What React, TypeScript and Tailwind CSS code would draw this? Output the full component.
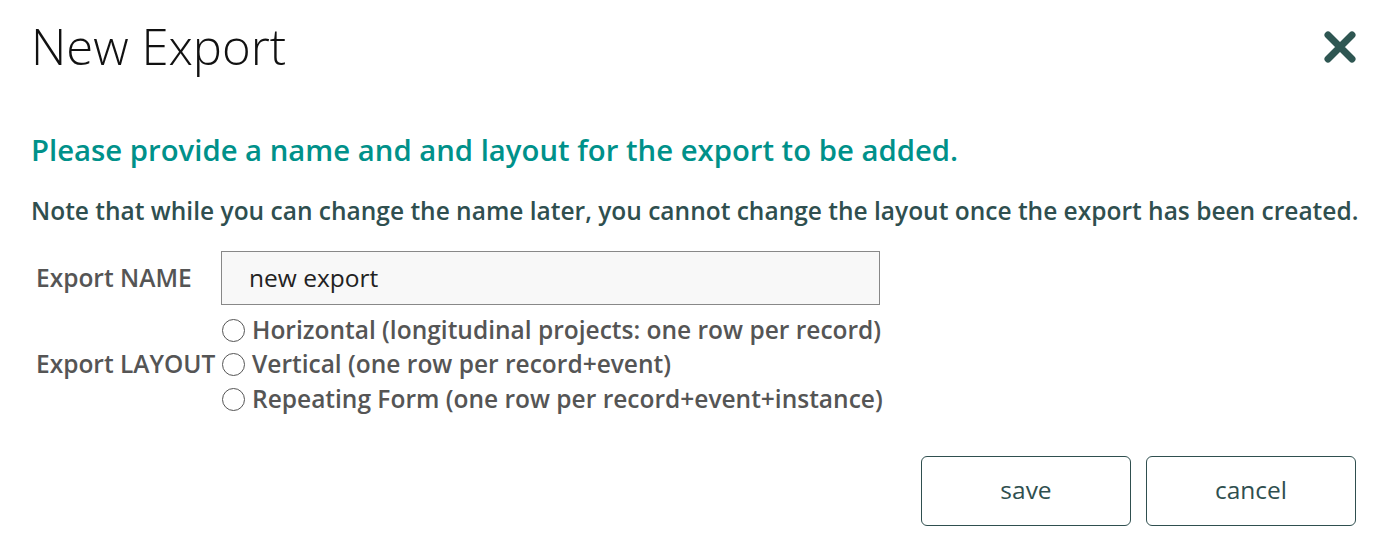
import React from 'react';

const options = [
  'Horizontal (longitudinal projects: one row per record)',
  'Vertical (one row per record+event)',
  'Repeating Form (one row per record+event+instance)',
];

export default function App() {
  return (
    <div
      className="w-[1373px] h-[547px] bg-white overflow-hidden"
      style={{ fontFamily: '"Open Sans", sans-serif' }}
    >
      {/* Header */}
      <div className="flex items-start justify-between pl-[31px] pr-[16px] pt-[16px]">
        <h1 className="text-[49px] font-light leading-[60px] text-[#111]">New Export</h1>
        <button className="mt-[14px]">
          <svg width="34" height="34" viewBox="0 0 34 34">
            <path
              d="M5 5 L29 29 M29 5 L5 29"
              stroke="#2e5652"
              strokeWidth="7"
              strokeLinecap="round"
            />
          </svg>
        </button>
      </div>

      <div className="px-[31px]">
        <p className="mt-[54px] text-[29.3px] font-semibold leading-[40px] text-[#00918a]">
          Please provide a name and and layout for the export to be added.
        </p>
        <p className="mt-[24px] text-[24.5px] font-semibold leading-[34px] text-[#2f4f4f] whitespace-nowrap">
          Note that while you can change the name later, you cannot change the layout once the export has been created.
        </p>

        {/* Form */}
        <div className="mt-[23px] ml-[5px] grid grid-cols-[185px_1fr] items-center">
          <label className="text-[24.5px] font-semibold text-[#555]">Export NAME</label>
          <div className="h-[54px] w-[659px] border border-[#888] bg-[#f8f8f8] flex items-center px-[27px] text-[24.5px] text-[#222]">
            new export
          </div>

          <label className="mt-[8px] text-[24.5px] font-semibold text-[#555] whitespace-nowrap">Export LAYOUT</label>
          <div className="flex flex-col pt-[8px] ml-[1px]">
            {options.map((o) => (
              <label key={o} className="flex items-center h-[34.5px] text-[24.5px] font-semibold text-[#555] whitespace-nowrap">
                <span className="w-[23px] h-[23px] rounded-full border border-[#555] bg-white mr-[7px] shrink-0" />
                {o}
              </label>
            ))}
          </div>
        </div>

        {/* Actions */}
        <div className="flex justify-end gap-[15px] mt-[39px] mr-[-14px]">
          <button className="w-[210px] h-[70px] rounded-[6px] border border-[#2f4f4f] text-[24.5px] text-[#2f4f4f]">
            save
          </button>
          <button className="w-[210px] h-[70px] rounded-[6px] border border-[#2f4f4f] text-[24.5px] text-[#2f4f4f]">
            cancel
          </button>
        </div>
      </div>
    </div>
  );
}
